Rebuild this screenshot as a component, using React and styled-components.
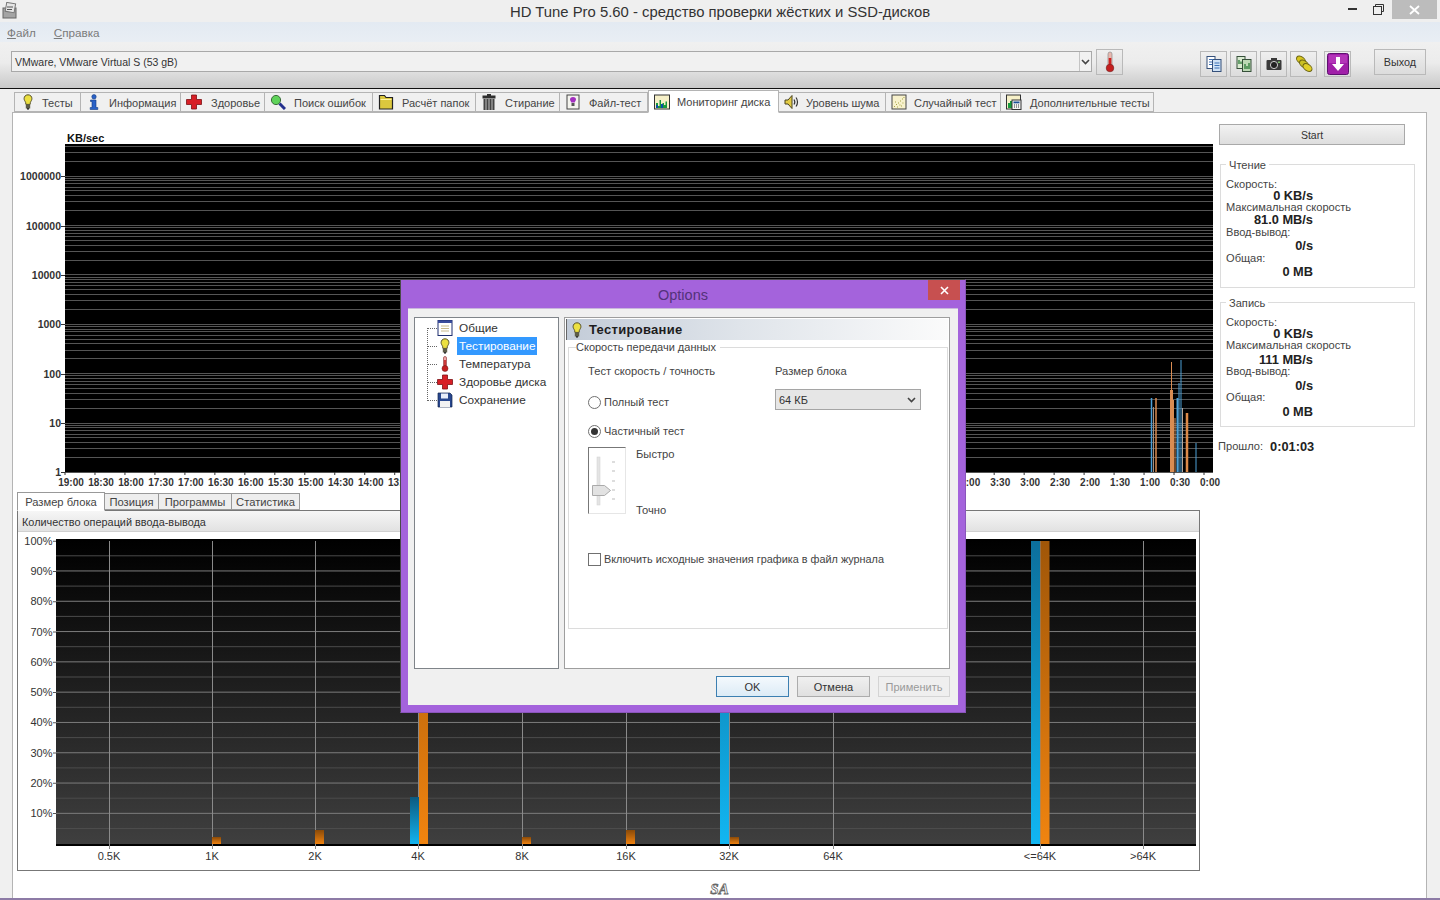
import React from "react";
import styled, { createGlobalStyle } from "styled-components";

const Global = createGlobalStyle`
  html, body { margin: 0; padding: 0; background: #f0f0f0; }
  * { box-sizing: border-box; }
  body { font-family: "Liberation Sans", Arial, sans-serif; font-size: 11px; color: #222; }
`;

const Page = styled.div`
  position: relative; width: 1440px; height: 900px; overflow: hidden;
  display: flex; flex-direction: column; background: #f0f0f0;
`;

/* ---------- Title bar ---------- */
const TitleBar = styled.header`
  position: relative; height: 22px; flex: none; display: flex; align-items: center; justify-content: center;
  background: #efefef; font-size: 14.850px; color: #333; padding-top: 1px;
`;
const AppIcon = styled.div`position: absolute; left: 2px; top: 2px; width: 16px; height: 17px;`;
const WinControls = styled.div`position: absolute; right: 3px; top: 0; display: flex; align-items: flex-start;`;
const WinBtn = styled.div`
  width: 26px; height: 19px; display: flex; align-items: center; justify-content: center;
`;
const WinClose = styled(WinBtn)`width: 45px; background: #bcbcbc; margin-left: 1px;`;

const MenuBar = styled.nav`
  height: 20px; flex: none; display: flex; align-items: center; gap: 18px; padding: 1px 0 0 7px;
  background: linear-gradient(180deg, #e3eaf2, #e9eef4); color: #7b7b7b; font-size: 11.700px;
  u { text-decoration-thickness: 1px; }
`;

/* ---------- Toolbar ---------- */
const Toolbar = styled.div`
  height: 47px; flex: none; display: flex; align-items: flex-start; padding: 9px 0 0 11px;
  background: linear-gradient(180deg, #f0f0f0 0%, #ececec 45%, #c9c9c9 100%);
  border-bottom: 1px solid #111;
`;
const DriveSelect = styled.div`
  width: 1081px; height: 21px; display: flex; align-items: center; justify-content: space-between;
  border: 1px solid #a9a9a9; background: #f1f1f1; padding-left: 3px; font-size: 10.500px; color: #333;
`;
const ComboArrow = styled.span`
  width: 12px; height: 19px; border-left: 1px solid #c4c4c4; display: flex; align-items: center; justify-content: center; flex: none;
`;
const IconBtn = styled.div`
  width: ${p => p.$w || 27}px; height: 26px; margin-left: ${p => p.$ml || 0}px; margin-top: ${p => p.$mt || 0}px;
  flex: none; display: flex; align-items: center; justify-content: center;
  border: 1px solid #b9b9b9; background: linear-gradient(180deg, #efefef, #dcdcdc); font-size: 10.800px; color: #333;
`;

/* ---------- Main tabs ---------- */
const TabStrip = styled.div`
  height: 23px; flex: none; display: flex; align-items: flex-end; padding-left: 14px;
`;
const Tab = styled.div`
  width: ${p => p.$w}px; height: ${p => (p.$active ? 23 : 20)}px; flex: none; display: flex; align-items: center;
  gap: ${p => p.$gap || 8}px; padding-left: 5px; font-size: 11px; color: #444; white-space: nowrap;
  background: ${p => (p.$active ? "#fff" : "#f0f0f0")};
  border: 1px solid #b4b4b4; border-left-width: ${p => (p.$active ? 1 : 0)}px;
  border-bottom-color: ${p => (p.$active ? "#fff" : "#b4b4b4")};
  margin-bottom: ${p => (p.$active ? -1 : 0)}px; position: relative; z-index: ${p => (p.$active ? 2 : 1)};
  &:first-child { border-left-width: 1px; }
`;
const TabLabel = styled.span`padding-top: ${p => (p.$active ? 0 : 1)}px;`;

const Sheet = styled.main`
  flex: 1; margin: 0 13px 0 12px; background: #fff; border: 1px solid #b4b4b4; border-bottom: 0;
  display: flex; flex-direction: column; min-height: 0;
`;
const TopRow = styled.section`display: flex; height: 378px; flex: none;`;
const ChartSvg = styled.svg`display: block; flex: none; overflow: visible;`;
const Side = styled.aside`width: 207px; flex: none; padding-top: 11px; display: flex; flex-direction: column;`;
const StartBtn = styled.div`
  width: 186px; height: 21px; flex: none; display: flex; align-items: center; justify-content: center;
  border: 1px solid #a9a9a9; background: linear-gradient(180deg, #f2f2f2, #dedede); font-size: 10.500px; color: #333; padding-top: 1px;
`;
const Group = styled.fieldset`
  width: 195px; height: ${p => p.$h}px; margin: ${p => p.$mt}px 0 0 1px; padding: 8px 0 0 5px; flex: none;
  border: 1px solid #dcdcdc; display: block; min-width: 0;
`;
const GroupLegend = styled.legend`
  margin-left: 0; padding: 0 3px; font-size: 11.100px; line-height: 12px; color: #444; transform: translateY(1px);
`;
const StatLabel = styled.div`
  height: ${p => p.$h}px; line-height: 12px; font-size: 11.100px; color: #444; white-space: nowrap;
`;
const StatValue = styled.div`
  width: 87px; height: ${p => p.$h}px; text-align: right; font-size: 12.800px; font-weight: 700; line-height: 13px; color: #222; white-space: nowrap;
`;
const Elapsed = styled.div`
  display: flex; align-items: center; margin: 12px 0 0 -1px; gap: 7px; font-size: 11.100px; color: #444; height: 14px;
  b { font-size: 12.800px; color: #222; }
`;

/* ---------- Lower panel ---------- */
const Lower = styled.section`margin-left: 4px; display: flex; flex-direction: column; flex: none;`;
const SubTabs = styled.div`display: flex; align-items: flex-end; height: 19px;`;
const SubTab = styled.div`
  width: ${p => p.$w}px; height: ${p => (p.$active ? 19 : 17)}px; flex: none; display: flex; align-items: center; justify-content: center;
  font-size: 11.200px; color: #444; background: ${p => (p.$active ? "#fff" : "#eee")}; padding-top: ${p => (p.$active ? 0 : 1)}px;
  border: 1px solid #999; border-left-width: ${p => (p.$active ? 1 : 0)}px; border-bottom-color: ${p => (p.$active ? "#fff" : "#999")};
  margin-bottom: ${p => (p.$active ? -1 : 0)}px; position: relative; z-index: 2;
`;
const Panel = styled.div`width: 1183px; height: 361px; border: 1px solid #777; background: #fff; display: flex; flex-direction: column;`;
const PanelHead = styled.div`
  height: 21px; flex: none; padding: 1px 0 0 4px; display: flex; align-items: center; font-size: 10.900px; color: #333;
  background: linear-gradient(180deg, #f6f6f6, #e2e2e2); border-bottom: 1px solid #d0d0d0;
`;
const Watermark = styled.div`
  align-self: center; margin: 10px 0 0 0; font: italic 700 15px "Liberation Serif", serif;
  color: #fff; -webkit-text-stroke: 0.8px #666;
`;
const BottomEdge = styled.div`height: 2px; flex: none; background: #8d7ba6;`;

/* ---------- Dialog ---------- */
const Dialog = styled.div`
  position: absolute; left: 400px; top: 279px; width: 566px; height: 434px; z-index: 10;
  background: #a463dc; border: 1px solid #4a4a4a; border-bottom-color: #8a55bb; border-right-color: #8a55bb;
  display: flex; flex-direction: column; padding: 0 7px 7px 7px;
`;
const DialogTitle = styled.div`
  position: relative; height: 28px; flex: none; display: flex; align-items: center; justify-content: center;
  font-size: 14.500px; color: #53327a; padding-top: 1px;
`;
const DialogClose = styled.div`
  position: absolute; right: -2px; top: 0; width: 32px; height: 20px; background: #c75050; display: flex; align-items: center; justify-content: center;
`;
const DialogClient = styled.div`
  flex: 1; background: #f0f0f0; padding: 8px 8px 0 6px; display: flex; flex-direction: column; min-height: 0; border-top: 1px solid #c9b7dc;
`;
const DialogBody = styled.div`display: flex; gap: 5px; height: 352px; flex: none;`;
const Tree = styled.div`
  position: relative; width: 145px; flex: none; background: #fff; border: 1px solid #7f8489; padding: 1px 0 0 22px;
  display: flex; flex-direction: column;
`;
const TreeRail = styled.div`
  position: absolute; left: 12px; top: 10px; height: 73px; width: 1px; border-left: 1px dotted #666;
`;
const TreeRow = styled.div`
  position: relative; height: 18px; display: flex; align-items: center; gap: 6px; font-size: 11.800px; color: #333; white-space: nowrap;
  &::before { content: ""; position: absolute; left: -10px; top: 9px; width: 10px; border-top: 1px dotted #666; }
`;
const TreeIcon = styled.span`width: 16px; height: 16px; flex: none; display: flex; align-items: center; justify-content: center; position: relative; z-index: 1;`;
const TreeText = styled.span`
  margin-left: ${p => (p.$sel ? -2 : 0)}px; padding: ${p => (p.$sel ? "2px 2px" : "0")}; line-height: 14px;
  background: ${p => (p.$sel ? "#3399ff" : "transparent")}; color: ${p => (p.$sel ? "#fff" : "#333")};
`;
const Pane = styled.div`
  flex: 1; background: #fff; border: 1px solid #9e9e9e; padding: 1px 1px 0 1px; display: flex; flex-direction: column; min-width: 0;
`;
const PaneHead = styled.div`
  height: 21px; flex: none; display: flex; align-items: center; gap: 4px; padding-left: 2px;
  border-left: 1px solid #666; font-size: 13px; font-weight: 700; letter-spacing: 0.3px; color: #1d1d1d;
  background: linear-gradient(90deg, #c3ccd8 0%, #dfe4ea 45%, #fbfbfb 100%);
`;
const FormGroup = styled.fieldset`
  margin: 1px 0 0 2px; width: 380px; height: 288px; padding: 0 0 0 19px; border: 1px solid #dcdcdc; min-width: 0; display: block; flex: none;
`;
const FormLegend = styled.legend`margin-left: -12px; padding: 0 4px 0 0; font-size: 11px; line-height: 12px; color: #444;`;
const FormCols = styled.div`display: flex; padding-top: 11px;`;
const FormColA = styled.div`width: 187px; flex: none; display: flex; flex-direction: column;`;
const FormColB = styled.div`display: flex; flex-direction: column;`;
const Caption = styled.div`height: 14px; line-height: 14px; font-size: 11.200px; color: #444; white-space: nowrap;`;
const OptRow = styled.div`
  display: flex; align-items: center; gap: 3px; height: 14px; margin-top: ${p => p.$mt}px; font-size: 11px; color: #444; white-space: nowrap;
`;
const Radio = styled.span`
  width: 13px; height: 13px; border-radius: 50%; border: 1px solid #707070; background: #fff; flex: none;
  display: flex; align-items: center; justify-content: center;
  &::after { content: ""; width: 7px; height: 7px; border-radius: 50%; background: ${p => (p.$on ? "#333" : "transparent")}; }
`;
const CheckBox = styled.span`width: 13px; height: 13px; border: 1px solid #707070; background: #fff; flex: none;`;
const SliderRow = styled.div`display: flex; gap: 10px; margin-top: 9px; height: 70px;`;
const SliderBox = styled.div`
  width: 38px; height: 67px; flex: none; border: 1px solid #e6e6e6; border-left: 1px solid #777; border-top: 1px solid #777;
`;
const SliderText = styled.div`display: flex; flex-direction: column; justify-content: space-between; height: 70px; padding-top: 0;`;
const SizeSelect = styled.div`
  width: 146px; height: 21px; margin-top: 11px; display: flex; align-items: center; justify-content: space-between; padding: 0 4px 0 3px;
  border: 1px solid #a5a5a5; background: #e6e6e6; font-size: 11px; color: #333;
`;
const LogRow = styled(OptRow)`margin-top: 35px; font-size: 10.850px;`;
const DialogFoot = styled.div`display: flex; justify-content: flex-end; gap: 8px; padding-top: 7px;`;
const DlgBtn = styled.div`
  width: ${p => p.$w || 73}px; height: 21px; display: flex; align-items: center; justify-content: center; font-size: 11px;
  color: ${p => (p.$disabled ? "#9a9a9a" : "#333")};
  border: 1px solid ${p => (p.$primary ? "#3c7fb1" : p.$disabled ? "#d4d4d4" : "#acacac")};
  background: ${p => (p.$primary ? "linear-gradient(180deg,#f4f9fd,#dcebf6)" : p.$disabled ? "#efefef" : "linear-gradient(180deg,#f0f0f0,#e0e0e0)")};
`;

/* ---------- Icons ---------- */
const Svg = ({ s = 16, w, h, vb = "0 0 16 16", children }) => (
  <svg width={w || s} height={h || s} viewBox={vb} style={{ display: "block", flex: "none" }}>{children}</svg>
);
const Bulb = () => <Svg><path d="M8 .8c-2.600 0-3.900 1.900-3.900 3.800 0 1.700 1 2.500 1.500 3.800l.3 2h4.200l.3-2c.5-1.300 1.500-2.100 1.500-3.800C11.900 2.700 10.600.8 8 .8z" fill="#ece040" stroke="#55502a"/><rect x="5.800" y="10.500" width="4.400" height="4" fill="#5c5c48"/><rect x="7" y="14" width="2" height="1.600" fill="#333"/></Svg>;
const Info = () => <Svg><circle cx="8" cy="2.800" r="2.200" fill="#2a62c8" stroke="#123a80" strokeWidth=".6"/><path d="M4.500 6H10v7.500h1.800V15.500H4.200V13.500H6V7.500H4.500z" fill="#2a62c8" stroke="#123a80" strokeWidth=".6"/></Svg>;
const Cross = () => <Svg><path d="M5.500 1h5v4.500H15.500v5H10.500V15h-5v-4.500H.5v-5h5z" fill="#d81f26" stroke="#7b1215" strokeWidth=".8"/></Svg>;
const Magnifier = () => <Svg><line x1="9.500" y1="9.500" x2="15" y2="15" stroke="#24308e" strokeWidth="3"/><circle cx="6" cy="6" r="4.600" fill="#5fd35a" stroke="#3a6b3a"/></Svg>;
const Folder = () => <Svg><path d="M1.500 4V1.500h5l1.500 2h6.500v11.500H1.500z" fill="#dcc83e" stroke="#222" strokeWidth="1.200"/><path d="M2.500 5.500h11" stroke="#fff4a0"/></Svg>;
const Trash = () => <Svg><rect x="1.500" y="1.500" width="13" height="3" fill="#2e2e2e"/><rect x="6" y="0" width="4" height="2" fill="#2e2e2e"/><path d="M2.500 5h11v11h-11z" fill="#444"/><path d="M5 5v11M8 5v11M11 5v11" stroke="#c0c0c0"/></Svg>;
const FileTest = () => <Svg><rect x="2" y="1" width="12" height="14" fill="#f4f4ee" stroke="#444"/><path d="M8 3c-2 0-3 1.300-3 2.500 0 1.200 1 1.800 1.300 3h3.400C10 7.300 11 6.700 11 5.500 11 4.300 10 3 8 3z" fill="#a22fc0"/><rect x="6.500" y="9" width="3" height="3" fill="#555"/></Svg>;
const Monitor = () => <Svg><rect x=".5" y="1" width="15" height="14" fill="#f6f0c8" stroke="#333"/><path d="M2 14V9h2v3h1.500V6H7v8h1.500v-5H10v2h1.500V7.500H13V14z" fill="#179a3c"/><path d="M2 14v-3h2v3zM7 14v-4h2v4z" fill="#0d4fa8"/></Svg>;
const Speaker = () => <Svg><path d="M1 6h3l4-4.500v13L4 10H1z" fill="#e3cc45" stroke="#4b4420"/><path d="M10 5.500c1 1.500 1 3.500 0 5M12 3.500c2 2.500 2 6.500 0 9" fill="none" stroke="#333" strokeWidth="1.200"/></Svg>;
const Scatter = () => <Svg><rect x="1" y="1" width="14" height="14" fill="#f7f1cc" stroke="#444"/><path d="M3 12.500h.9M5 10.500h.9M6 13h.9M7 9h.9M8.500 11h.9M9 7h.9M10 12h.9M11 5h.9M11.500 9h.9M12.500 3.500h.9M4 8h.9" stroke="#9a9a35"/></Svg>;
const CalcTab = () => <Svg><rect x=".5" y="1" width="14" height="14" fill="#f6f0c8" stroke="#333"/><path d="M2 14V9h2v5zM4 14V7h2v7z" fill="#179a3c"/><rect x="6" y="6" width="9" height="9.500" fill="#f4f4f4" stroke="#333"/><rect x="7.500" y="7.500" width="6" height="1.800" fill="#1c4f96"/><path d="M8 11h1M10 11h1M12 11h1M8 13h1M10 13h1M12 13h1" stroke="#333"/></Svg>;
const Thermo = () => <Svg w={12} h={22} vb="0 0 12 22"><rect x="4" y="1" width="4" height="14" rx="2" fill="#e9b7ae" stroke="#8e8e8e" strokeWidth=".7"/><rect x="4.700" y="7" width="2.600" height="9" fill="#cf2222"/><circle cx="6" cy="17" r="3.800" fill="#c41f1f" stroke="#702020" strokeWidth=".6"/></Svg>;
const Thermo16 = () => <Svg><rect x="6.500" y=".5" width="3" height="10" rx="1.500" fill="#eaa" stroke="#822" strokeWidth=".6"/><rect x="7.200" y="4" width="1.600" height="7" fill="#c41f1f"/><circle cx="8" cy="12.500" r="3" fill="#c41f1f" stroke="#6a1a1a" strokeWidth=".5"/></Svg>;
const Doc = () => <Svg><rect x="1" y=".5" width="14" height="15" fill="#fff" stroke="#1f2f70"/><rect x="1" y=".5" width="14" height="2.500" fill="#3a4c9c"/><path d="M4 6h8M4 8.500h8M4 11h8" stroke="#c8b98a"/></Svg>;
const Floppy = () => <Svg><path d="M1 1h12l2 2v12H1z" fill="#28478f" stroke="#13264f" strokeWidth=".7"/><rect x="4" y="1.500" width="7" height="5" fill="#e8eefa"/><rect x="3" y="9" width="10" height="6" fill="#f2f2f2"/></Svg>;
const CopyInfo = () => <Svg w={18} h={18} vb="0 0 18 18"><rect x="2" y="1.500" width="8" height="12" fill="#fff" stroke="#35507a"/><rect x="7.500" y="4.500" width="8.500" height="12" fill="#cfe2f5" stroke="#35507a"/><path d="M4 4.500h4M4 7h3M4 9.500h3M9.500 8h5M9.500 10.500h5M9.500 13h5" stroke="#3c70b4"/></Svg>;
const CopyChart = () => <Svg w={18} h={18} vb="0 0 18 18"><rect x="2" y="1.500" width="8" height="12" fill="#d9ead0" stroke="#36503a"/><rect x="7.500" y="4.500" width="8.500" height="12" fill="#bcd8b4" stroke="#36503a"/><path d="M4 9V5M6 9V6.500M10 14v-5M12 14v-3M14 14V8" stroke="#2a7a36" strokeWidth="1.300"/></Svg>;
const Camera = () => <Svg w={18} h={18} vb="0 0 18 18"><rect x="1.500" y="5" width="15" height="10" rx="1" fill="#3a3a3a"/><rect x="6" y="3" width="6" height="3" fill="#3a3a3a"/><circle cx="9" cy="10" r="3.600" fill="#222" stroke="#ccc" strokeWidth="1"/><rect x="13" y="6.500" width="2" height="1.500" fill="#7ac06a"/></Svg>;
const Coins = () => <Svg w={20} h={20} vb="0 0 20 20"><ellipse cx="7" cy="6" rx="5" ry="3.200" transform="rotate(35 7 6)" fill="#d6c51e" stroke="#6d6510"/><ellipse cx="10" cy="10" rx="5" ry="3.200" transform="rotate(35 10 10)" fill="#c9c024" stroke="#6d6510"/><ellipse cx="13.500" cy="13.500" rx="5" ry="3.200" transform="rotate(35 13.500 13.500)" fill="#e0cf26" stroke="#6d6510"/></Svg>;
const Down = () => <Svg w={22} h={22} vb="0 0 22 22"><rect x=".5" y=".5" width="21" height="21" rx="2" fill="#a01fa8" stroke="#5e1070"/><rect x="2" y="2" width="18" height="8" fill="#c54bc8" opacity=".5"/><path d="M9 4h4v7h4l-6 7-6-7h4z" fill="#fff"/></Svg>;
const Chevron = () => <svg width="9" height="6" viewBox="0 0 9 6" style={{ display: "block" }}><path d="M1 1l3.500 3.500L8 1" fill="none" stroke="#444" strokeWidth="1.600"/></svg>;

/* ---------- Data ---------- */
const TABS = [
  ["Тесты", 67, Bulb, 6], ["Информация", 100, Info, 7], ["Здоровье", 84, Cross, 9], ["Поиск ошибок", 108, Magnifier, 8],
  ["Расчёт папок", 103, Folder, 8], ["Стирание", 84, Trash, 8], ["Файл-тест", 88, FileTest, 8], ["Мониторинг диска", 131, Monitor, 7, true],
  ["Уровень шума", 107, Speaker, 6], ["Случайный тест", 115, Scatter, 7], ["Дополнительные тесты", 153, CalcTab, 8],
];
const READ = [["Скорость:", 11], ["0 KB/s", 12, 1], ["Максимальная скорость", 12], ["81.0 MB/s", 13, 1], ["Ввод-вывод:", 13], ["0/s", 13, 1], ["Общая:", 13], ["0 MB", 13, 1]];
const WRITE = [["Скорость:", 11], ["0 KB/s", 12, 1], ["Максимальная скорость", 14], ["111 MB/s", 12, 1], ["Ввод-вывод:", 14], ["0/s", 12, 1], ["Общая:", 14], ["0 MB", 13, 1]];

const DEC = [472, 423, 374, 324, 275, 226, 176];
const STEP = 49.4;
const logLines = [];
for (let d = 0; d < 7; d++) {
  for (let m = 1; m < 10; m++) {
    const y = 472 - (d + Math.log10(m)) * STEP;
    if (y > 144) logLines.push(Math.round(y) + 0.5);
  }
}
const SPIKES = [
  [1151.5, 398, "#4d9fd6", 1.5], [1153.5, 407, "#a78f7c", 1], [1156, 398, "#d98c52", 1.5],
  [1171.5, 390, "#d98c52", 3], [1171.5, 362, "#d98c52", 1], [1173.5, 400, "#d98c52", 1], [1175, 418, "#d98c52", 1],
  [1177.5, 398, "#4d9fd6", 2], [1179, 383, "#4d9fd6", 1], [1181, 360, "#4d9fd6", 1], [1182.5, 408, "#b4a79c", 1],
  [1187, 413, "#dd8a48", 2.5], [1196, 443, "#4d9fd6", 1],
];
const LEFT_TIMES = ["19:00","18:30","18:00","17:30","17:00","16:30","16:00","15:30","15:00","14:30","14:00","13:30","13:00","12:30","12:00","11:30","11:00","10:30","10:00","9:30","9:00","8:30","8:00","7:30","7:00","6:30","6:00","5:30","5:00","4:30","4:00","3:30","3:00","2:30","2:00","1:30","1:00","0:30","0:00"];
const timeX = i => 71 + i * (1139 / 38);

const TopChart = () => (
  <ChartSvg width={1206} height={378} viewBox="13 113 1206 378">
    <text x="67" y="142" fontSize="11" fontWeight="700" fill="#111" fontFamily="Liberation Sans">KB/sec</text>
    <rect x="65" y="144" width="1148" height="328" fill="#000" />
    {logLines.map((y, i) => <line key={i} x1="65" x2="1213" y1={y} y2={y} stroke="#555" strokeWidth="1" />)}
    {SPIKES.map(([x, t, c, w], i) => <rect key={i} x={x - w / 2} y={t} width={w} height={472 - t} fill={c} />)}
    {["1", "10", "100", "1000", "10000", "100000", "1000000"].map((l, i) => (
      <g key={l}>
        <line x1="61" x2="65" y1={DEC[i] + .5} y2={DEC[i] + .5} stroke="#333" />
        <text x="61" y={DEC[i] + 3.500} textAnchor="end" fontSize="10.500" fontWeight="700" fill="#333" fontFamily="Liberation Sans">{l}</text>
      </g>
    ))}
    {LEFT_TIMES.map((l, i) => (
      <g key={l + i}>
        <line x1={timeX(i) - 6} x2={timeX(i) - 6} y1="472" y2="475" stroke="#333" />
        <text x={timeX(i)} y="485.500" textAnchor="middle" fontSize="10" fontWeight="700" fill="#333" fontFamily="Liberation Sans">{l}</text>
      </g>
    ))}
  </ChartSvg>
);

const COLS = [[109, "0.5K"], [212, "1K"], [315, "2K"], [418, "4K"], [522, "8K"], [626, "16K"], [729, "32K"], [833, "64K"], [1040, "<=64K"], [1143, ">64K"]];
const BARS = [
  [212, 837, "o"], [315, 830, "o"], [410, 797, "b"], [419, 541, "o"], [522, 837, "o"], [626, 830, "o"],
  [720, 541, "b"], [730, 837, "o"], [1031, 541, "b"], [1040.500, 541, "o"],
];

const BottomChart = () => (
  <ChartSvg width={1181} height={337} viewBox="18 532 1181 337">
    <defs>
      <linearGradient id="plotBg" x1="0" y1="0" x2="0" y2="1">
        <stop offset="0" stopColor="#000" /><stop offset="1" stopColor="#3f3f3f" />
      </linearGradient>
      <linearGradient id="blueBar" x1="0" y1="541" x2="0" y2="844" gradientUnits="userSpaceOnUse">
        <stop offset="0" stopColor="#0c6f9c" /><stop offset="1" stopColor="#11b6f2" />
      </linearGradient>
      <linearGradient id="orangeBar" x1="0" y1="541" x2="0" y2="844" gradientUnits="userSpaceOnUse">
        <stop offset="0" stopColor="#a05608" /><stop offset="1" stopColor="#f08410" />
      </linearGradient>
      <linearGradient id="orangeShort" x1="0" y1="0" x2="0" y2="1">
        <stop offset="0" stopColor="#8a4a08" /><stop offset="1" stopColor="#ef8210" />
      </linearGradient>
      <linearGradient id="blueShort" x1="0" y1="0" x2="0" y2="1">
        <stop offset="0" stopColor="#0c5a80" /><stop offset="1" stopColor="#12b4f0" />
      </linearGradient>
    </defs>
    <rect x="56" y="540" width="1140" height="305" fill="url(#plotBg)" />
    <rect x="56" y="539" width="1140" height="2" fill="#000" />
    <rect x="56" y="844" width="1140" height="2" fill="#000" />
    {Array.from({ length: 19 }, (_, i) => {
      const y = 828.5 - i * 15.15;
      return <line key={i} x1="56" x2="1196" y1={y} y2={y} stroke={i % 2 ? "#7d7d7d" : "#4c4c4c"} />;
    })}
    {COLS.map(([x, l]) => (
      <g key={l}>
        <line x1={x + .5} x2={x + .5} y1="541" y2="849" stroke="#8a8a8a" />
        <text x={x} y="860" textAnchor="middle" fontSize="11" fill="#333" fontFamily="Liberation Sans">{l}</text>
      </g>
    ))}
    {BARS.map(([x, t, k]) => {
      const tall = t < 600;
      const fill = k === "b" ? (tall ? "url(#blueBar)" : "url(#blueShort)") : (tall ? "url(#orangeBar)" : "url(#orangeShort)");
      return <rect key={x} x={x} y={t} width="9" height={844 - t} fill={fill} />;
    })}
    {Array.from({ length: 10 }, (_, i) => (
      <text key={i} x="52.500" y={817 - i * 30.25} textAnchor="end" fontSize="11" fill="#333" fontFamily="Liberation Sans">{(i + 1) * 10}%</text>
    ))}
    {Array.from({ length: 10 }, (_, i) => (
      <line key={i} x1="53" x2="56" y1={813.5 - i * 30.25} y2={813.5 - i * 30.25} stroke="#555" />
    ))}
  </ChartSvg>
);

const StatList = ({ rows }) => rows.map(([t, h, v]) =>
  v ? <StatValue key={t} $h={h}>{t}</StatValue> : <StatLabel key={t} $h={h}>{t}</StatLabel>
);

const SliderArt = () => (
  <svg width="36" height="65" viewBox="0 0 36 65" style={{ display: "block" }}>
    <rect x="8" y="9" width="3" height="48" fill="#e4e4e4" stroke="#d0d0d0" strokeWidth=".5" />
    {[14, 23, 33, 42, 51].map(y => <line key={y} x1="23" x2="26" y1={y} y2={y} stroke="#bbb" />)}
    <path d="M3.500 37.500h12l6 5-6 5h-12z" fill="#e2e2e2" stroke="#aaa" />
  </svg>
);

export default function App() {
  return (
    <Page>
      <Global />
      <TitleBar>
        <AppIcon>
          <svg width="16" height="17" viewBox="0 0 16 17" style={{ display: "block" }}>
            <rect x="1" y="6" width="13" height="10" fill="#a4a4a4" stroke="#666" />
            <rect x="4" y="1" width="9" height="9" fill="#e6e6e6" stroke="#777" transform="rotate(10 8 5)" />
            <path d="M5 5h6M5 7.500h5" stroke="#555" />
          </svg>
        </AppIcon>
        HD Tune Pro 5.60 - средство проверки жёстких и SSD-дисков
        <WinControls>
          <WinBtn><svg width="9" height="3" viewBox="0 0 9 3"><rect y="0" width="9" height="2" fill="#333" /></svg></WinBtn>
          <WinBtn>
            <svg width="11" height="11" viewBox="0 0 11 11"><path d="M2.500 2.500V.5h8v7h-2" fill="none" stroke="#333" /><rect x=".5" y="2.500" width="8" height="8" fill="none" stroke="#333" /></svg>
          </WinBtn>
          <WinClose><svg width="11" height="10" viewBox="0 0 11 10"><path d="M1 1l9 8M10 1l-9 8" stroke="#fff" strokeWidth="1.800" /></svg></WinClose>
        </WinControls>
      </TitleBar>
      <MenuBar>
        <span><u>Ф</u>айл</span>
        <span><u>С</u>правка</span>
      </MenuBar>
      <Toolbar>
        <DriveSelect>VMware, VMware Virtual S (53 gB)<ComboArrow><Chevron /></ComboArrow></DriveSelect>
        <IconBtn $ml={4} $mt={-2}><Thermo /></IconBtn>
        <IconBtn $ml={77}><CopyInfo /></IconBtn>
        <IconBtn $ml={3}><CopyChart /></IconBtn>
        <IconBtn $ml={3}><Camera /></IconBtn>
        <IconBtn $ml={3}><Coins /></IconBtn>
        <IconBtn $ml={7}><Down /></IconBtn>
        <IconBtn $ml={23} $mt={-2} $w={52}>Выход</IconBtn>
      </Toolbar>
      <TabStrip>
        {TABS.map(([t, w, I, g, a]) => <Tab key={t} $w={w} $gap={g} $active={a}><I /><TabLabel $active={a}>{t}</TabLabel></Tab>)}
      </TabStrip>
      <Sheet>
        <TopRow>
          <TopChart />
          <Side>
            <StartBtn>Start</StartBtn>
            <Group $h={130} $mt={13}>
              <GroupLegend>Чтение</GroupLegend>
              <StatList rows={READ} />
            </Group>
            <Group $h={131} $mt={8}>
              <GroupLegend>Запись</GroupLegend>
              <StatList rows={WRITE} />
            </Group>
            <Elapsed>Прошло: <b>0:01:03</b></Elapsed>
          </Side>
        </TopRow>
        <Lower>
          <SubTabs>
            <SubTab $w={88} $active>Размер блока</SubTab>
            <SubTab $w={54}>Позиция</SubTab>
            <SubTab $w={73}>Программы</SubTab>
            <SubTab $w={68}>Статистика</SubTab>
          </SubTabs>
          <Panel>
            <PanelHead>Количество операций ввода-вывода</PanelHead>
            <BottomChart />
          </Panel>
        </Lower>
        <Watermark>SA</Watermark>
      </Sheet>
      <BottomEdge />

      <Dialog>
        <DialogTitle>
          Options
          <DialogClose><svg width="9" height="9" viewBox="0 0 9 9"><path d="M1 1l7 7M8 1l-7 7" stroke="#fff" strokeWidth="1.600" /></svg></DialogClose>
        </DialogTitle>
        <DialogClient>
          <DialogBody>
            <Tree>
              <TreeRail />
              <TreeRow><TreeIcon><Doc /></TreeIcon><TreeText>Общие</TreeText></TreeRow>
              <TreeRow><TreeIcon><Bulb /></TreeIcon><TreeText $sel>Тестирование</TreeText></TreeRow>
              <TreeRow><TreeIcon><Thermo16 /></TreeIcon><TreeText>Температура</TreeText></TreeRow>
              <TreeRow><TreeIcon><Cross /></TreeIcon><TreeText>Здоровье диска</TreeText></TreeRow>
              <TreeRow><TreeIcon><Floppy /></TreeIcon><TreeText>Сохранение</TreeText></TreeRow>
            </Tree>
            <Pane>
              <PaneHead><Bulb />Тестирование</PaneHead>
              <FormGroup>
                <FormLegend>Скорость передачи данных</FormLegend>
                <FormCols>
                  <FormColA>
                    <Caption>Тест скорость / точность</Caption>
                    <OptRow $mt={17}><Radio />Полный тест</OptRow>
                    <OptRow $mt={15}><Radio $on />Частичный тест</OptRow>
                    <SliderRow>
                      <SliderBox><SliderArt /></SliderBox>
                      <SliderText><Caption>Быстро</Caption><Caption>Точно</Caption></SliderText>
                    </SliderRow>
                    <LogRow><CheckBox />Включить исходные значения графика в файл журнала</LogRow>
                  </FormColA>
                  <FormColB>
                    <Caption>Размер блока</Caption>
                    <SizeSelect>64 КБ<Chevron /></SizeSelect>
                  </FormColB>
                </FormCols>
              </FormGroup>
            </Pane>
          </DialogBody>
          <DialogFoot>
            <DlgBtn $primary>OK</DlgBtn>
            <DlgBtn>Отмена</DlgBtn>
            <DlgBtn $disabled $w={72}>Применить</DlgBtn>
          </DialogFoot>
        </DialogClient>
      </Dialog>
    </Page>
  );
}
